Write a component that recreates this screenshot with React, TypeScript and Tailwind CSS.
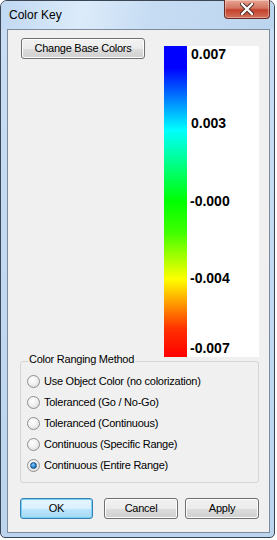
import React from "react";

const font = { fontFamily: '"Liberation Sans", Arial, sans-serif' };

function Radio({ label, checked }: { label: string; checked?: boolean }) {
  return (
    <div className="flex h-[21px] items-center pl-[6px]">
      <span className="flex h-[13px] w-[13px] items-center justify-center rounded-full border border-[#8e8f8f] bg-[radial-gradient(circle_at_40%_35%,#ffffff_0%,#f1f1f1_45%,#d4d4d4_100%)]">
        {checked && (
          <span className="h-[7px] w-[7px] rounded-full border border-[#1b4f7e] bg-[radial-gradient(circle_at_40%_35%,#8fd0ff_0%,#2f89d4_50%,#104c86_100%)]" />
        )}
      </span>
      <span className="ml-[4px] text-[11px] leading-[13px] tracking-[-0.25px] text-black">{label}</span>
    </div>
  );
}

function Btn({ label, primary, className }: { label: string; primary?: boolean; className?: string }) {
  return (
    <button
      className={
        "flex h-[21px] items-center justify-center rounded-[3px] border text-[11px] leading-[13px] tracking-[-0.25px] text-black " +
        (primary
          ? "border-[#3c7fb1] bg-[linear-gradient(to_bottom,#e8f5fc_0%,#d9f0fc_50%,#bee6fd_51%,#a7d9f5_100%)] shadow-[inset_0_0_0_1px_#71d3f7] "
          : "border-[#707070] bg-[linear-gradient(to_bottom,#f2f2f2_0%,#ebebeb_50%,#dddddd_51%,#cfcfcf_100%)] shadow-[inset_0_0_0_1px_#fcfcfc] ") +
        (className ?? "")
      }
    >
      {label}
    </button>
  );
}

export default function App() {
  const labels = [
    { t: "0.007", mt: "mt-0" },
    { t: "0.003", mt: "mt-[53px]" },
    { t: "-0.000", mt: "mt-[62px]" },
    { t: "-0.004", mt: "mt-[61px]" },
    { t: "-0.007", mt: "mt-[54px]" },
  ];
  return (
    <div className="h-[540px] w-[277px] bg-white" style={font}>
      <div className="flex h-[538px] w-[275px] flex-col rounded-t-[7px] rounded-b-[5px] border border-[#3b4654] bg-[linear-gradient(to_bottom,#c9def4_0%,#bcd4ee_100%)]">
        {/* title bar */}
        <div className="flex h-[28px] shrink-0 items-start justify-between bg-[linear-gradient(100deg,#c0d8f2_0%,#dcebfa_30%,#c6dcf3_55%,#bcd5ef_100%)] rounded-t-[6px]">
          <span className="pl-[8px] pt-[7px] text-[12px] leading-[14px] text-black">Color Key</span>
          <div className="mr-[4px] -mt-px flex h-[19px] w-[46px] items-center justify-center rounded-b-[4px] border border-t-0 border-[#6b2a21] bg-[linear-gradient(to_bottom,#e8a493_0%,#d47663_45%,#c2422c_55%,#d3705a_100%)] shadow-[inset_0_0_0_1px_rgba(255,255,255,0.35)]">
            <svg width="14" height="12" viewBox="0 0 14 12">
              <path d="M2 1 L12 11 M12 1 L2 11" stroke="#4a2a24" strokeWidth="4.2" strokeLinecap="round" />
              <path d="M2 1 L12 11 M12 1 L2 11" stroke="#ffffff" strokeWidth="2.4" strokeLinecap="round" />
            </svg>
          </div>
        </div>

        {/* client */}
        <div className="mb-[4px] ml-[6px] mr-[4px] flex flex-1 flex-col border border-[#7d8c9e] bg-[#f0f0f0]">
          <div className="flex items-start">
            <Btn label="Change Base Colors" className="ml-[13px] mt-[8px] h-[19px] w-[124px]" />
            <div className="ml-[19px] mt-[16px] flex h-[311px] w-[95px] bg-white">
              <div className="h-full w-[23px] bg-[linear-gradient(to_bottom,#0000ff_0%,#0000ff_7%,#00ffff_27%,#00ff00_50%,#40ff00_60%,#ffff00_75%,#ff3000_91%,#ff0000_100%)]" />
              <div className="flex flex-col pl-[4px]">
                {labels.map((l) => (
                  <span key={l.t} className={`${l.mt} text-[14px] font-bold leading-[16px] text-black ${l.t.startsWith("-") ? "-ml-px" : ""}`}>
                    {l.t}
                  </span>
                ))}
              </div>
            </div>
          </div>

          <div className="ml-[12px] mt-[4px] w-[239px] rounded-[3px] border border-[#d5d5d5] pb-[6px]">
            <div className="-mt-[9px] ml-[7px] flex text-[11px] leading-[13px]">
              <span className="bg-[#f0f0f0] px-px tracking-[-0.25px] text-black">Color Ranging Method</span>
            </div>
            <div className="mt-[5px] flex flex-col">
              <Radio label="Use Object Color (no colorization)" />
              <Radio label="Toleranced (Go / No-Go)" />
              <Radio label="Toleranced (Continuous)" />
              <Radio label="Continuous (Specific Range)" />
              <Radio label="Continuous (Entire Range)" checked />
            </div>
          </div>

          <div className="ml-[12px] mt-[15px] flex">
            <Btn label="OK" primary className="w-[73px]" />
            <Btn label="Cancel" className="ml-[11px] w-[74px]" />
            <Btn label="Apply" className="ml-[7px] w-[74px]" />
          </div>
        </div>
      </div>
    </div>
  );
}
